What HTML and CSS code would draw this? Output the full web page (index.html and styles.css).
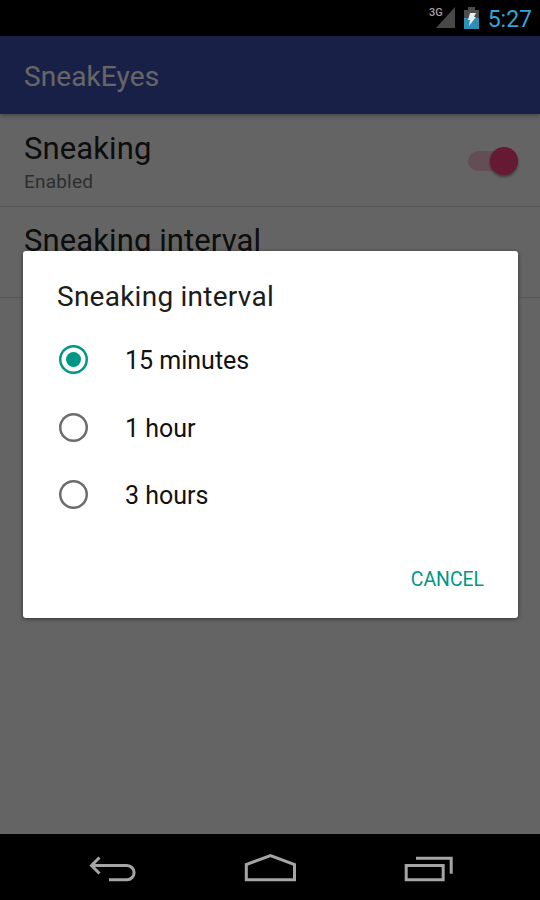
FILE: index.html
```html
<!DOCTYPE html>
<html lang="en">

<head>
    <meta charset="UTF-8">
    <meta name="viewport" content="width=device-width, initial-scale=1.0">
    <title>SneakEyes</title>
    <link rel="stylesheet" href="styles.css">
</head>

<body>
    <div class="status-bar">
        <span class="network">3G</span>
        <svg class="signal" viewBox="0 0 19 21"><path d="M19 0v21H0z"/></svg>
        <svg class="battery" viewBox="0 0 15 22">
            <path fill="#4c4c4c" d="M0 3h4V0h7v3h4v8H0z"/>
            <path fill="#2d8fb5" d="M0 11h15v11H0z"/>
            <path fill="#e4eef2" d="M6 6h6l-2 4h2l-7 9 1-6H4z"/>
        </svg>
        <span class="clock">5:27</span>
    </div>

    <div class="screen">
        <header class="app-bar">
            <h1 class="app-title">SneakEyes</h1>
        </header>
        <ul class="settings">
            <li class="setting">
                <div>
                    <p class="setting-title">Sneaking</p>
                    <p class="setting-summary">Enabled</p>
                </div>
                <div class="switch"><span class="thumb"></span></div>
            </li>
            <li class="setting">
                <div>
                    <p class="setting-title">Sneaking interval</p>
                </div>
            </li>
        </ul>

        <div class="scrim">
            <div class="dialog">
                <h2 class="dialog-title">Sneaking interval</h2>
                <ul class="options">
                    <li class="option"><span class="radio checked"></span><span class="option-label">15 minutes</span></li>
                    <li class="option"><span class="radio"></span><span class="option-label">1 hour</span></li>
                    <li class="option"><span class="radio"></span><span class="option-label">3 hours</span></li>
                </ul>
                <div class="actions">
                    <button class="cancel">CANCEL</button>
                </div>
            </div>
        </div>
    </div>

    <nav class="nav-bar">
        <svg class="nav-icon" viewBox="0 0 52 32">
            <path d="M4 12.5h35a7.1 7.1 0 0 1 0 14.2H21M11.5 4.5l-8 8 8 8"/>
        </svg>
        <svg class="nav-icon" viewBox="0 0 52 32">
            <path d="M2.3 26.7V11.5L26.5 2.5l24 9v15.2z"/>
        </svg>
        <svg class="nav-icon" viewBox="0 0 52 32">
            <path d="M3.2 12.5h37v14.2h-37zM13 5.3h35.2v15.5"/>
        </svg>
    </nav>
</body>

</html>
```
FILE: styles.css
```css
* {
    margin: 0;
    padding: 0;
    box-sizing: border-box;
    list-style: none;
}

body {
    display: flex;
    flex-direction: column;
    width: 540px;
    height: 900px;
    background: #000;
    font-family: Roboto, sans-serif;
    overflow: hidden;
}

/* status bar */

.status-bar {
    display: flex;
    align-items: flex-start;
    height: 36px;
    padding: 7px 8px 0 0;
    justify-content: flex-end;
}

.network {
    margin-right: -7px;
    font-size: 11px;
    font-weight: 500;
    line-height: 12px;
    color: #a0a0a0;
}

.signal {
    width: 19px;
    height: 21px;
    fill: #484848;
}

.battery {
    width: 15px;
    height: 22px;
    margin-left: 9px;
}

.clock {
    margin-left: 9px;
    font-size: 23px;
    line-height: 25px;
    color: #33a5d6;
}

/* settings screen */

.screen {
    position: relative;
    flex: 1;
    background: #fafafa;
}

.app-bar {
    display: flex;
    align-items: center;
    height: 78px;
    padding: 3px 24px 0;
    background: #3f51b5;
    box-shadow: 0 1px 5px rgba(0, 0, 0, 0.4);
}

.app-title {
    font-size: 28px;
    font-weight: 400;
    letter-spacing: 0.1px;
    color: #fff;
}

.setting {
    display: flex;
    justify-content: space-between;
    height: 91px;
    padding: 15px 22px 0 24px;
    border-bottom: 1px solid #dedede;
}

.setting:first-child {
    height: 93px;
    padding-top: 16px;
}

.setting-title {
    font-size: 31px;
    line-height: 38px;
    letter-spacing: 0.1px;
    color: #212121;
}

.setting-summary {
    font-size: 19px;
    line-height: 28px;
    letter-spacing: 0.2px;
    color: #737373;
}

.switch {
    display: flex;
    justify-content: flex-end;
    align-items: center;
    width: 50px;
    height: 20px;
    margin-top: 21px;
    border-radius: 10px;
    background: #fbc2d6;
}

.thumb {
    width: 28px;
    height: 28px;
    border-radius: 50%;
    background: #ff4081;
    box-shadow: 0 2px 3px rgba(0, 0, 0, 0.4);
}

/* dialog */

.scrim {
    position: absolute;
    inset: 0;
    padding: 214.5px 22px 0 23px;
    background: rgba(0, 0, 0, 0.6);
}

.dialog {
    height: 367px;
    padding: 27.5px 34px 0;
    border-radius: 3px;
    background: #fff;
    box-shadow: 0 1px 4px rgba(0, 0, 0, 0.5);
}

.dialog-title {
    font-size: 28px;
    font-weight: 400;
    line-height: 38px;
    letter-spacing: 0.25px;
    color: #1c1c1c;
}

.options {
    padding-top: 10px;
}

.option {
    display: flex;
    align-items: center;
    height: 67.5px;
    padding-left: 2px;
}

.radio {
    display: flex;
    justify-content: center;
    align-items: center;
    width: 29px;
    height: 29px;
    margin-right: 37px;
    border-radius: 50%;
    box-shadow: inset 0 0 0 2.5px #6c6c6c;
}

.radio.checked {
    box-shadow: inset 0 0 0 2.5px #009688;
}

.radio.checked::after {
    content: "";
    width: 15px;
    height: 15px;
    border-radius: 50%;
    background: #009688;
}

.option-label {
    padding-top: 3px;
    font-size: 25px;
    line-height: 32px;
    color: #111;
}

.actions {
    display: flex;
    justify-content: flex-end;
    padding-top: 39px;
}

.cancel {
    border: none;
    background: none;
    font-family: inherit;
    font-size: 19.4px;
    line-height: 24px;
    color: #009688;
}

/* navigation bar */

.nav-bar {
    display: flex;
    justify-content: space-between;
    height: 66px;
    padding: 19px 85px 0 88px;
}

.nav-icon {
    width: 52px;
    height: 32px;
    fill: none;
    stroke: #a5a5a5;
    stroke-width: 3;
}

.nav-icon:nth-child(2) {
    margin-right: 3px;
}
```
